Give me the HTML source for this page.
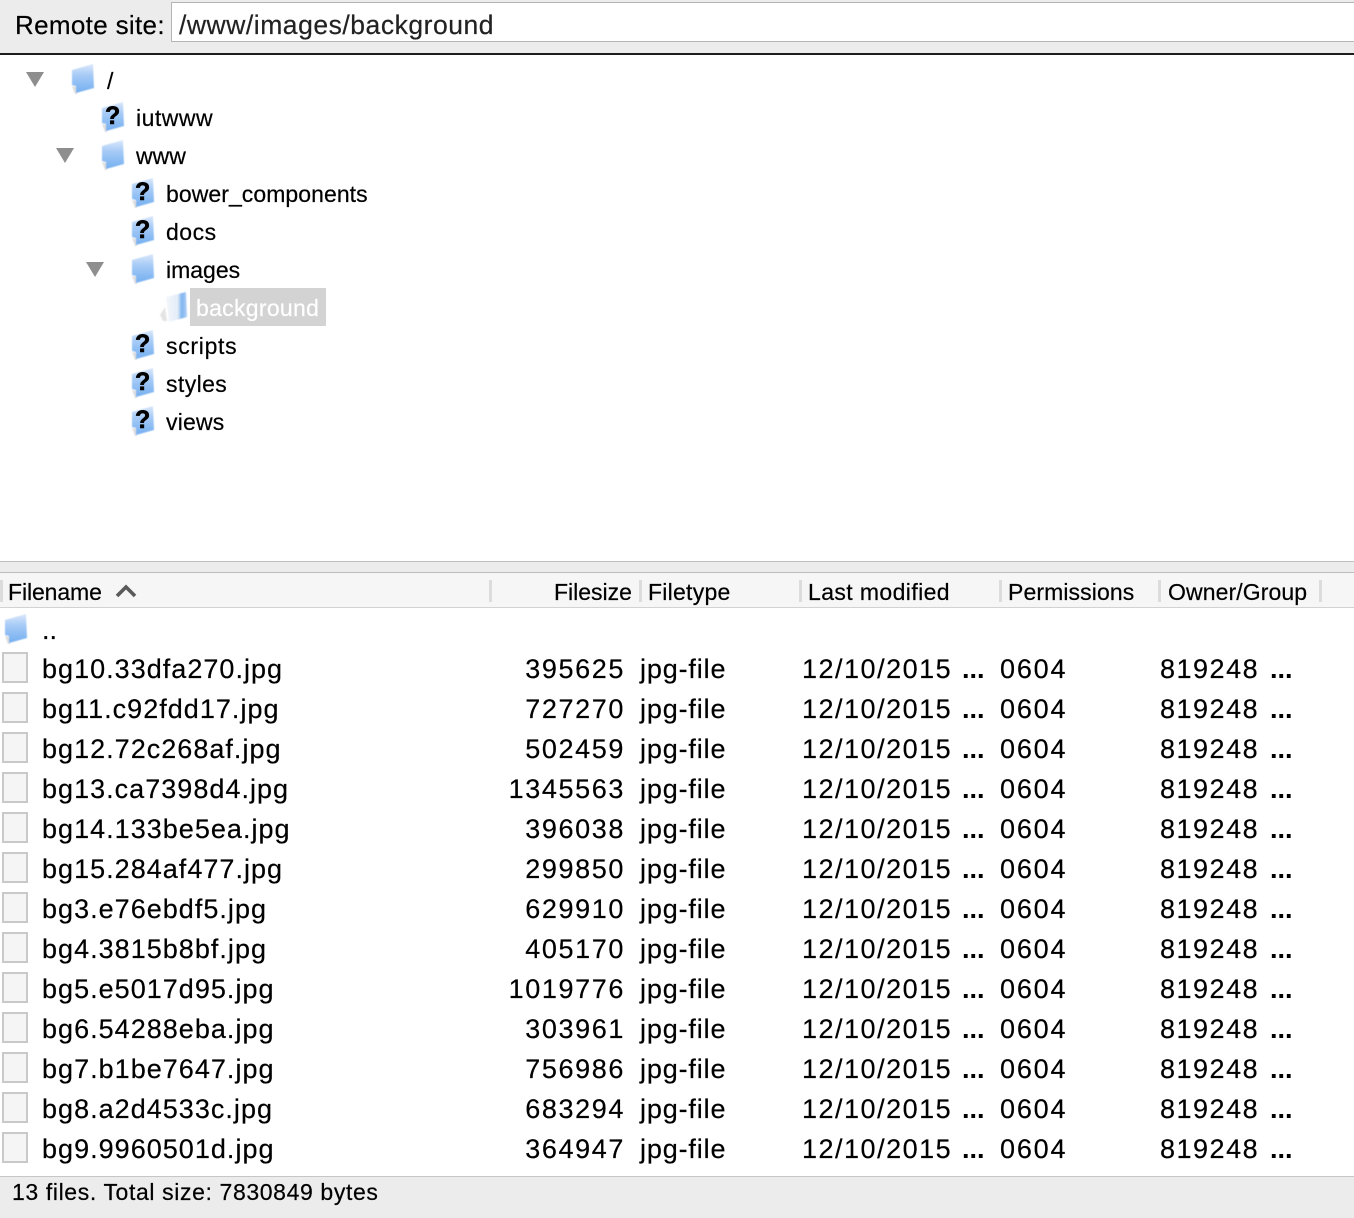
<!DOCTYPE html>
<html><head><meta charset="utf-8"><style>
html,body{margin:0;padding:0;background:#fff}
#p{position:relative;width:1354px;height:1218px;overflow:hidden;font-family:"Liberation Sans",sans-serif;color:#000;background:#fff;-webkit-text-stroke:.2px currentColor}
#p div,#p span.a{position:absolute;white-space:nowrap}
.t{font-size:23px;line-height:38px;height:38px}
.h{font-size:23px;line-height:30px;top:577px;height:30px}
.s{top:580px;width:3px;height:22px;background:#dcdcdc}
.r{left:0;width:1354px;height:40px;font-size:27px;line-height:40px;letter-spacing:1.5px}
.r span{position:absolute;white-space:nowrap}
.n{left:42px;letter-spacing:1.02px}.z{right:729px;text-align:right;letter-spacing:1.6px}.y{left:640px;letter-spacing:.85px}.m{left:802px}.o{left:1000px;letter-spacing:1.8px}.g{left:1160px}
.e{left:962px;letter-spacing:0;font-weight:bold;-webkit-text-stroke:0}.f{left:1270px;letter-spacing:0;font-weight:bold;-webkit-text-stroke:0}
.d{position:absolute;left:2px;top:3px;width:22px;height:27px;border:2px solid #c9c9c9;background:#f5f5f5}
svg{position:absolute;overflow:visible}
.q{position:absolute;font-weight:bold;font-size:25px;line-height:26px;color:#000;-webkit-text-stroke:.6px #000}
</style></head><body><div id="p">
<svg width="0" height="0" style="position:absolute"><defs>
<linearGradient id="b" x1="0" y1="0" x2="0" y2="1"><stop offset="0" stop-color="#dbe8fa"/><stop offset=".4" stop-color="#a5caf6"/><stop offset="1" stop-color="#74aff0"/></linearGradient>
<linearGradient id="w" x1="0" y1="0" x2="1" y2="0"><stop offset="0" stop-color="#f4f7fb"/><stop offset=".55" stop-color="#e4edf8"/><stop offset=".75" stop-color="#7fb5f0"/><stop offset="1" stop-color="#b0d0f5"/></linearGradient>
<filter id="f" x="-20%" y="-20%" width="140%" height="140%"><feGaussianBlur stdDeviation=".5"/></filter>
<g id="fo" filter="url(#f)"><path d="M0 22 L3 30 L5 30 L5 23 Z" fill="#dedede"/><path d="M0 6 L21 0 L22 24 L4 29 L4 22 L0 21 Z" fill="url(#b)"/></g>
</defs></svg>

<div style="left:0;top:0;width:1354px;height:53px;background:#ececec"></div>
<div style="left:0;top:53px;width:1354px;height:2px;background:#1d1d1d"></div>
<div style="left:171px;top:2px;width:1183px;height:38px;background:#fff;border:1px solid #b4b4b4;border-right:0"></div>
<div style="left:15px;top:6px;font-size:26px;line-height:38px;letter-spacing:.33px">Remote site:</div>
<div style="left:179px;top:6px;font-size:26.5px;line-height:38px;letter-spacing:.53px;color:#222">/www/images/background</div>

<svg style="left:26px;top:72px" width="18" height="15"><path d="M0 0H18L9 15Z" fill="#8e8e8e"/></svg>
<svg style="left:56px;top:148px" width="18" height="15"><path d="M0 0H18L9 15Z" fill="#8e8e8e"/></svg>
<svg style="left:86px;top:262px" width="18" height="15"><path d="M0 0H18L9 15Z" fill="#8e8e8e"/></svg>

<svg style="left:72px;top:64px" width="24" height="30"><use href="#fo"/></svg>
<svg style="left:102px;top:140px" width="24" height="30"><use href="#fo"/></svg>
<svg style="left:132px;top:254px" width="24" height="30"><use href="#fo"/></svg>
<svg style="left:102px;top:102px" width="24" height="30"><use href="#fo"/></svg><span class="q" style="left:105px;top:103px">?</span>
<svg style="left:132px;top:178px" width="24" height="30"><use href="#fo"/></svg><span class="q" style="left:135px;top:179px">?</span>
<svg style="left:132px;top:216px" width="24" height="30"><use href="#fo"/></svg><span class="q" style="left:135px;top:217px">?</span>
<svg style="left:132px;top:330px" width="24" height="30"><use href="#fo"/></svg><span class="q" style="left:135px;top:331px">?</span>
<svg style="left:132px;top:368px" width="24" height="30"><use href="#fo"/></svg><span class="q" style="left:135px;top:369px">?</span>
<svg style="left:132px;top:406px" width="24" height="30"><use href="#fo"/></svg><span class="q" style="left:135px;top:407px">?</span>
<svg style="left:160px;top:291px" width="28" height="32"><g filter="url(#f)"><path d="M0 24 L5 16 L7 30 L3 30 Z" fill="#e4e4e4"/><path d="M6 6 L26 1 L27 26 L9 31 Z" fill="url(#w)"/></g></svg>

<div class="t" style="left:107px;top:62px">/</div>
<div class="t" style="left:136px;top:99px;letter-spacing:.5px">iutwww</div>
<div class="t" style="left:136px;top:137px">www</div>
<div class="t" style="left:166px;top:175px;letter-spacing:.06px">bower_components</div>
<div class="t" style="left:166px;top:213px;letter-spacing:.5px">docs</div>
<div class="t" style="left:166px;top:251px">images</div>
<div style="left:190px;top:288px;width:136px;height:38px;background:#d3d3d3"></div>
<div class="t" style="left:196px;top:289px;color:#fff;letter-spacing:.3px">background</div>
<div class="t" style="left:166px;top:327px;letter-spacing:.7px">scripts</div>
<div class="t" style="left:166px;top:365px;letter-spacing:.4px">styles</div>
<div class="t" style="left:166px;top:403px;letter-spacing:.2px">views</div>

<div style="left:0;top:561px;width:1354px;height:12px;background:#ececec;border-top:1px solid #bdbdbd;border-bottom:1px solid #bdbdbd;box-sizing:border-box"></div>
<div style="left:0;top:573px;width:1354px;height:34px;background:#f6f6f6"></div>
<div style="left:0;top:607px;width:1354px;height:1px;background:#d2d2d2"></div>
<div class="s" style="left:0"></div>
<div class="s" style="left:489px"></div>
<div class="s" style="left:639px"></div>
<div class="s" style="left:799px"></div>
<div class="s" style="left:999px"></div>
<div class="s" style="left:1158px"></div>
<div class="s" style="left:1319px"></div>
<div class="h" style="left:8px;letter-spacing:-.1px">Filename</div>
<svg style="left:115px;top:584px" width="22" height="14"><path d="M2 12 L11 3 L20 12" fill="none" stroke="#5a5a5a" stroke-width="3.6"/></svg>
<div class="h" style="left:554px">Filesize</div>
<div class="h" style="left:648px;letter-spacing:.25px">Filetype</div>
<div class="h" style="left:808px;letter-spacing:.4px">Last modified</div>
<div class="h" style="left:1008px;letter-spacing:.1px">Permissions</div>
<div class="h" style="left:1168px;letter-spacing:.1px">Owner/Group</div>

<svg style="left:5px;top:614px" width="24" height="30"><use href="#fo"/></svg>
<div style="left:42px;top:610px;font-size:27px;line-height:40px">..</div>

<div class="r" style="top:649px"><i class="d"></i><span class="n">bg10.33dfa270.jpg</span><span class="z">395625</span><span class="y">jpg-file</span><span class="m">12/10/2015</span><span class="e">...</span><span class="o">0604</span><span class="g">819248</span><span class="f">...</span></div>
<div class="r" style="top:689px"><i class="d"></i><span class="n">bg11.c92fdd17.jpg</span><span class="z">727270</span><span class="y">jpg-file</span><span class="m">12/10/2015</span><span class="e">...</span><span class="o">0604</span><span class="g">819248</span><span class="f">...</span></div>
<div class="r" style="top:729px"><i class="d"></i><span class="n">bg12.72c268af.jpg</span><span class="z">502459</span><span class="y">jpg-file</span><span class="m">12/10/2015</span><span class="e">...</span><span class="o">0604</span><span class="g">819248</span><span class="f">...</span></div>
<div class="r" style="top:769px"><i class="d"></i><span class="n">bg13.ca7398d4.jpg</span><span class="z">1345563</span><span class="y">jpg-file</span><span class="m">12/10/2015</span><span class="e">...</span><span class="o">0604</span><span class="g">819248</span><span class="f">...</span></div>
<div class="r" style="top:809px"><i class="d"></i><span class="n">bg14.133be5ea.jpg</span><span class="z">396038</span><span class="y">jpg-file</span><span class="m">12/10/2015</span><span class="e">...</span><span class="o">0604</span><span class="g">819248</span><span class="f">...</span></div>
<div class="r" style="top:849px"><i class="d"></i><span class="n">bg15.284af477.jpg</span><span class="z">299850</span><span class="y">jpg-file</span><span class="m">12/10/2015</span><span class="e">...</span><span class="o">0604</span><span class="g">819248</span><span class="f">...</span></div>
<div class="r" style="top:889px"><i class="d"></i><span class="n">bg3.e76ebdf5.jpg</span><span class="z">629910</span><span class="y">jpg-file</span><span class="m">12/10/2015</span><span class="e">...</span><span class="o">0604</span><span class="g">819248</span><span class="f">...</span></div>
<div class="r" style="top:929px"><i class="d"></i><span class="n">bg4.3815b8bf.jpg</span><span class="z">405170</span><span class="y">jpg-file</span><span class="m">12/10/2015</span><span class="e">...</span><span class="o">0604</span><span class="g">819248</span><span class="f">...</span></div>
<div class="r" style="top:969px"><i class="d"></i><span class="n">bg5.e5017d95.jpg</span><span class="z">1019776</span><span class="y">jpg-file</span><span class="m">12/10/2015</span><span class="e">...</span><span class="o">0604</span><span class="g">819248</span><span class="f">...</span></div>
<div class="r" style="top:1009px"><i class="d"></i><span class="n">bg6.54288eba.jpg</span><span class="z">303961</span><span class="y">jpg-file</span><span class="m">12/10/2015</span><span class="e">...</span><span class="o">0604</span><span class="g">819248</span><span class="f">...</span></div>
<div class="r" style="top:1049px"><i class="d"></i><span class="n">bg7.b1be7647.jpg</span><span class="z">756986</span><span class="y">jpg-file</span><span class="m">12/10/2015</span><span class="e">...</span><span class="o">0604</span><span class="g">819248</span><span class="f">...</span></div>
<div class="r" style="top:1089px"><i class="d"></i><span class="n">bg8.a2d4533c.jpg</span><span class="z">683294</span><span class="y">jpg-file</span><span class="m">12/10/2015</span><span class="e">...</span><span class="o">0604</span><span class="g">819248</span><span class="f">...</span></div>
<div class="r" style="top:1129px"><i class="d"></i><span class="n">bg9.9960501d.jpg</span><span class="z">364947</span><span class="y">jpg-file</span><span class="m">12/10/2015</span><span class="e">...</span><span class="o">0604</span><span class="g">819248</span><span class="f">...</span></div>

<div style="left:0;top:1176px;width:1354px;height:42px;background:#ececec;border-top:1px solid #c6c6c6;box-sizing:border-box"></div>
<div style="left:12px;top:1177px;font-size:23px;line-height:30px;letter-spacing:.62px">13 files. Total size: 7830849 bytes</div>
</div></body></html>
